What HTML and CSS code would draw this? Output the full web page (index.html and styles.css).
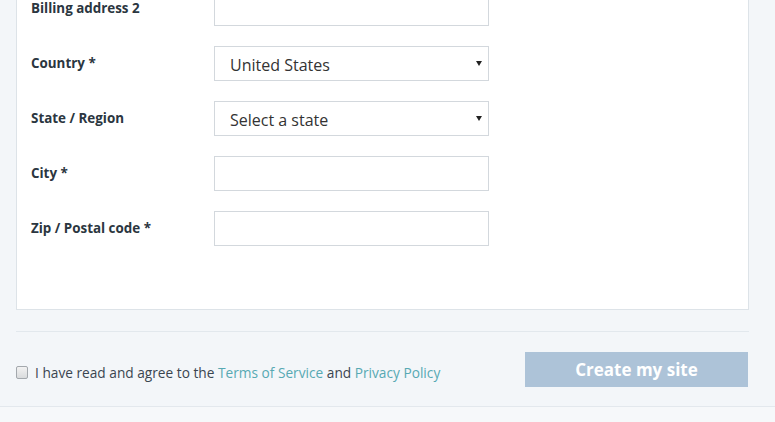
FILE: index.html
```html
<!DOCTYPE html>
<html lang="en">
<head>
    <meta charset="UTF-8">
    <meta name="viewport" content="width=device-width, initial-scale=1.0">
    <title>Billing details</title>
    <link rel="stylesheet" href="styles.css">
</head>
<body>
    <div class="page">
        <div class="card">
            <div class="row">
                <label for="address2">Billing address 2</label>
                <input type="text" id="address2">
            </div>
            <div class="row">
                <label for="country">Country *</label>
                <div class="select-wrap">
                    <select id="country">
                        <option>United States</option>
                    </select>
                </div>
            </div>
            <div class="row">
                <label for="state">State / Region</label>
                <div class="select-wrap">
                    <select id="state">
                        <option>Select a state</option>
                    </select>
                </div>
            </div>
            <div class="row">
                <label for="city">City *</label>
                <input type="text" id="city">
            </div>
            <div class="row">
                <label for="zip">Zip / Postal code *</label>
                <input type="text" id="zip">
            </div>
        </div>

        <div class="footer">
            <label class="agree">
                <input type="checkbox">
                <span>I have read and agree to the <a href="#">Terms of Service</a> and <a href="#">Privacy Policy</a></span>
            </label>
            <button type="button" disabled>Create my site</button>
        </div>
    </div>
    <div class="bottom"></div>
</body>
</html>
```

FILE: styles.css
```css
body { margin: 0; background: #f3f6f9; font-family: "Open Sans", "Liberation Sans", sans-serif; color: #2e3a44; overflow: hidden; }
.page { width: 733px; margin-left: 16px; }
.card { background: #fff; border: 1px solid #dde3e8; border-top: none; margin-top: -40px; padding: 31px 14px 63px; display: flex; flex-direction: column; gap: 20px; }
.row { display: flex; align-items: center; height: 35px; }
.row > label { width: 183px; font-size: 13.4px; font-weight: 700; line-height: 18px; color: #2b3640; padding-bottom: 1px; }
.row input, .row select { box-sizing: border-box; width: 275px; height: 35px; border: 1px solid #d3d8dd; background: #fff; font-family: inherit; font-size: 16px; color: #333; }
.select-wrap { position: relative; }
.row select { appearance: none; -webkit-appearance: none; padding: 2px 30px 0 15px; border-radius: 0; }
.select-wrap::after { content: ""; position: absolute; right: 7px; top: 15px; border-left: 3px solid transparent; border-right: 3px solid transparent; border-top: 5px solid #222; pointer-events: none; }
.footer { margin-top: 21px; border-top: 1px solid #e2e8ed; padding: 20px 0 19px; display: flex; align-items: center; justify-content: space-between; }
.agree { display: flex; align-items: center; font-size: 13.7px; color: #3a4550; padding-top: 5px; }
.agree input { appearance: none; -webkit-appearance: none; box-sizing: border-box; width: 12px; height: 13px; margin: 0 7px 0 0; border: 1px solid #a3a8ad; border-radius: 2px; background: linear-gradient(#f2f2f2, #d9dbdd); }
.agree a { color: #57a9b3; text-decoration: none; }
button { width: 223px; height: 35px; margin-right: 1px; background: #adc3d8; color: #fff; border: none; font-family: inherit; font-size: 17px; font-weight: 700; }
.bottom { height: 20px; background: #f6f8fa; border-top: 1px solid #e3e8ed; }
```
